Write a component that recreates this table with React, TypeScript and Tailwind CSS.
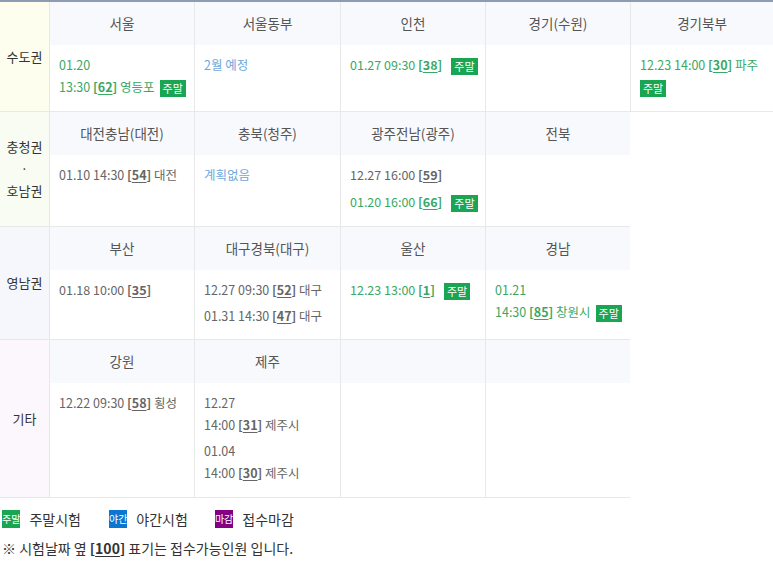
import React from 'react';

type Box = { title: string; entries: React.ReactNode[] };
type Region = { label: string[]; bg: string; boxes: Box[] };

const GREEN = 'text-[#3aa865]';
const GRAY = 'text-[#666]';
const BLUE = 'text-[#6ea8de]';

function Num({ n }: { n: number }) {
  return (
    <b className="font-bold">
      [<u className="underline underline-offset-2">{n}</u>]
    </b>
  );
}

function Badge({ className = '' }: { className?: string }) {
  return (
    <span
      className={`inline-block bg-[#19a552] text-white text-[11px] leading-[17px] px-[3px] align-middle ${className}`}
    >
      주말
    </span>
  );
}

function Entry({
  color,
  className = 'mb-[4px]',
  children,
}: {
  color: string;
  className?: string;
  children: React.ReactNode;
}) {
  return <div className={`${color} ${className}`}>{children}</div>;
}

const regions: Region[] = [
  {
    label: ['수도권'],
    bg: 'bg-[#fefeee]',
    boxes: [
      {
        title: '서울',
        entries: [
          <Entry color={GREEN}>
            01.20
            <br />
            13:30 <Num n={62} /> 영등포<Badge className="ml-[5px]" />
          </Entry>,
        ],
      },
      { title: '서울동부', entries: [<Entry color={BLUE}>2월 예정</Entry>] },
      {
        title: '인천',
        entries: [
          <Entry color={GREEN}>
            01.27 09:30 <Num n={38} />
            <Badge className="ml-[9px]" />
          </Entry>,
        ],
      },
      { title: '경기(수원)', entries: [] },
      {
        title: '경기북부',
        entries: [
          <Entry color={GREEN}>
            12.23 14:00 <Num n={30} /> 파주
            <br />
            <Badge />
          </Entry>,
        ],
      },
    ],
  },
  {
    label: ['충청권', '·', '호남권'],
    bg: 'bg-[#f9fcf3]',
    boxes: [
      {
        title: '대전충남(대전)',
        entries: [
          <Entry color={GRAY}>
            01.10 14:30 <Num n={54} /> 대전
          </Entry>,
        ],
      },
      { title: '충북(청주)', entries: [<Entry color={BLUE}>계획없음</Entry>] },
      {
        title: '광주전남(광주)',
        entries: [
          <Entry color={GRAY} className="mb-[4px]">
            12.27 16:00 <Num n={59} />
          </Entry>,
          <Entry color={GREEN} className="mb-[4px] leading-[23px]">
            01.20 16:00 <Num n={66} />
            <Badge className="ml-[9px]" />
          </Entry>,
        ],
      },
      { title: '전북', entries: [] },
    ],
  },
  {
    label: ['영남권'],
    bg: 'bg-[#f5f7fd]',
    boxes: [
      {
        title: '부산',
        entries: [
          <Entry color={GRAY}>
            01.18 10:00 <Num n={35} />
          </Entry>,
        ],
      },
      {
        title: '대구경북(대구)',
        entries: [
          <Entry color={GRAY}>
            12.27 09:30 <Num n={52} /> 대구
          </Entry>,
          <Entry color={GRAY} className="mb-[3px]">
            01.31 14:30 <Num n={47} /> 대구
          </Entry>,
        ],
      },
      {
        title: '울산',
        entries: [
          <Entry color={GREEN}>
            12.23 13:00 <Num n={1} />
            <Badge className="ml-[9px]" />
          </Entry>,
        ],
      },
      {
        title: '경남',
        entries: [
          <Entry color={GREEN}>
            01.21
            <br />
            14:30 <Num n={85} /> 창원시<Badge className="ml-[5px]" />
          </Entry>,
        ],
      },
    ],
  },
  {
    label: ['기타'],
    bg: 'bg-[#fcf6fd]',
    boxes: [
      {
        title: '강원',
        entries: [
          <Entry color={GRAY}>
            12.22 09:30 <Num n={58} /> 횡성
          </Entry>,
        ],
      },
      {
        title: '제주',
        entries: [
          <Entry color={GRAY}>
            12.27
            <br />
            14:00 <Num n={31} /> 제주시
          </Entry>,
          <Entry color={GRAY}>
            01.04
            <br />
            14:00 <Num n={30} /> 제주시
          </Entry>,
        ],
      },
      { title: '', entries: [] },
      { title: '', entries: [] },
    ],
  },
];

function ExamBox({ box }: { box: Box }) {
  return (
    <div className="flex flex-col border-l border-b border-[#e8e8e8]">
      <div className="h-[43px] flex items-center justify-center bg-[#f8f9fc] text-[13.5px] text-[#555]">
        {box.title}
      </div>
      <div className="flex-1 pt-[9px] pb-[9px] pl-[9px] pr-[4px] text-[12.5px] leading-[22px]">
        {box.entries.map((e, i) => (
          <React.Fragment key={i}>{e}</React.Fragment>
        ))}
      </div>
    </div>
  );
}

export default function App() {
  return (
    <div
      className="w-[773px] min-h-[567px] bg-white text-[#333]"
      style={{ fontFamily: '"Noto Sans CJK KR", "Noto Sans", sans-serif' }}
    >
      <div className="border-t-2 border-[#8e9cb2] grid grid-cols-[49px_145px_146px_145px_145px_1fr]">
        {regions.map((r) => (
          <React.Fragment key={r.label.join('')}>
            <div
              className={`${r.bg} col-start-1 border-b border-[#e8e8e8] flex flex-col items-center justify-center text-[13px] leading-[22px] text-[#333]`}
            >
              {r.label.map((l) => (
                <span key={l}>{l}</span>
              ))}
            </div>
            {r.boxes.map((b, i) => (
              <ExamBox key={i} box={b} />
            ))}
          </React.Fragment>
        ))}
      </div>

      {/* 범례 */}
      <div className="mt-[12px] flex items-center text-[14px] text-[#333] leading-[18px]">
        <span className="inline-block bg-[#19a552] text-white text-[10px] leading-[18px] ml-[2px]">주말</span>
        <span className="ml-[9px]">주말시험</span>
        <span className="inline-block bg-[#0b76d2] text-white text-[10px] leading-[18px] ml-[28px]">야간</span>
        <span className="ml-[9px]">야간시험</span>
        <span className="inline-block bg-[#830083] text-white text-[10px] leading-[18px] ml-[27px]">마감</span>
        <span className="ml-[9px]">접수마감</span>
      </div>
      <div className="mt-[10px] ml-[2px] text-[14px] text-[#333]">
        ※ 시험날짜 옆 <Num n={100} /> 표기는 접수가능인원 입니다.
      </div>
    </div>
  );
}
